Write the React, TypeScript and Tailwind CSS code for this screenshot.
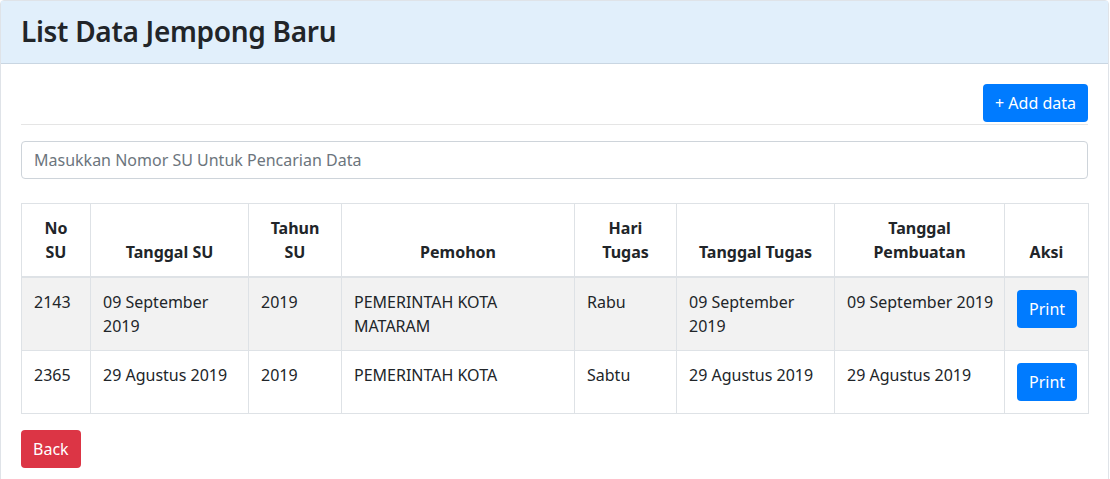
import React from 'react';

const rows = [
  {
    no: '2143',
    tglSu: ['09 September', '2019'],
    tahun: '2019',
    pemohon: ['PEMERINTAH KOTA', 'MATARAM'],
    hari: 'Rabu',
    tglTugas: ['09 September', '2019'],
    tglBuat: '09 September 2019',
  },
  {
    no: '2365',
    tglSu: ['29 Agustus 2019'],
    tahun: '2019',
    pemohon: ['PEMERINTAH KOTA'],
    hari: 'Sabtu',
    tglTugas: ['29 Agustus 2019'],
    tglBuat: '29 Agustus 2019',
  },
];

const Lines = ({ lines }: { lines: string[] }) => (
  <>
    {lines.map((l, i) => (
      <span key={i} className="block whitespace-nowrap">
        {l}
      </span>
    ))}
  </>
);

export default function App() {
  const th = 'border border-[#dee2e6] border-b-2 px-3 py-3 align-bottom text-center font-bold';
  const td = 'border border-[#dee2e6] px-3 py-3 align-top whitespace-nowrap';

  return (
    <div className="bg-white text-[#212529] text-base leading-6" style={{ fontFamily: '"Noto Sans", "Open Sans", sans-serif' }}>
      <div className="w-[1109px] border border-[#dfe3e8] rounded-t">
        <div className="h-[63px] bg-[#e1effb] border-b border-[#c9d6e2] px-5 flex items-center">
          <h3 className="text-[28px] font-semibold leading-tight mb-[2px] tracking-[-0.3px]">List Data Jempong Baru</h3>
        </div>

        <div className="p-5">
          <div className="flex justify-end">
            <button className="h-[38px] px-3 rounded bg-[#007bff] text-white">+ Add data</button>
          </div>
          <hr className="mt-[2px] mb-4 border-t border-[#e5e5e5]" />

          <input
            className="w-full h-[38px] px-3 border border-[#ced4da] rounded placeholder:text-[#6c757d] outline-none"
            placeholder="Masukkan Nomor SU Untuk Pencarian Data"
          />

          <table className="mt-6 w-full border-collapse table-fixed">
            <colgroup>
              <col className="w-[69px]" />
              <col className="w-[158px]" />
              <col className="w-[93px]" />
              <col className="w-[233px]" />
              <col className="w-[102px]" />
              <col className="w-[158px]" />
              <col className="w-[170px]" />
              <col className="w-[84px]" />
            </colgroup>
            <thead>
              <tr>
                <th className={th}>No<br />SU</th>
                <th className={th}>Tanggal SU</th>
                <th className={th}>Tahun<br />SU</th>
                <th className={th}>Pemohon</th>
                <th className={th}>Hari<br />Tugas</th>
                <th className={th}>Tanggal Tugas</th>
                <th className={th}>Tanggal<br />Pembuatan</th>
                <th className={th}>Aksi</th>
              </tr>
            </thead>
            <tbody>
              {rows.map((r, i) => (
                <tr key={r.no} className={i % 2 === 0 ? 'bg-[#f2f2f2]' : ''}>
                  <td className={td}>{r.no}</td>
                  <td className={td}><Lines lines={r.tglSu} /></td>
                  <td className={td}>{r.tahun}</td>
                  <td className={td}><Lines lines={r.pemohon} /></td>
                  <td className={td}>{r.hari}</td>
                  <td className={td}><Lines lines={r.tglTugas} /></td>
                  <td className={td}>{r.tglBuat}</td>
                  <td className={td + ' text-center'}>
                    <button className="h-[38px] px-3 rounded bg-[#007bff] text-white">Print</button>
                  </td>
                </tr>
              ))}
            </tbody>
          </table>

          <button className="mt-4 h-[38px] px-3 rounded bg-[#dc3545] text-white">Back</button>
        </div>
      </div>
    </div>
  );
}
